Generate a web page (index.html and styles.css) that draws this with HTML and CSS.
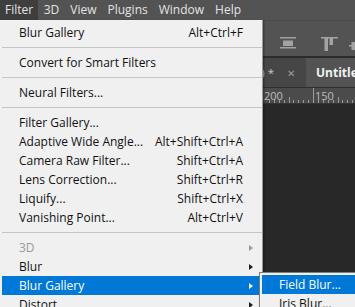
FILE: index.html
```html
<!DOCTYPE html>
<html lang="en">
<head>
    <meta charset="UTF-8">
    <meta name="viewport" content="width=device-width, initial-scale=1.0">
    <title>Filter menu</title>
    <link rel="stylesheet" href="styles.css">
</head>
<body>
    <div class="menubar">
        <span class="top-item active">Filter</span>
        <span class="top-item">3D</span>
        <span class="top-item">View</span>
        <span class="top-item">Plugins</span>
        <span class="top-item">Window</span>
        <span class="top-item">Help</span>
    </div>

    <div class="workspace">
        <div class="options-bar">
            <svg class="opt-icon" width="16" height="12" viewBox="0 0 16 12">
                <rect x="0" y="0" width="16" height="1.5" fill="#a3a3a3"/>
                <rect x="3" y="3.5" width="10" height="5.5" fill="#a3a3a3"/>
                <rect x="0" y="10" width="16" height="1.5" fill="#a3a3a3"/>
            </svg>
            <div class="divider"></div>
            <svg class="opt-icon" width="17" height="14" viewBox="0 0 17 14">
                <rect x="0" y="0" width="17" height="1.5" fill="#a3a3a3"/>
                <rect x="3.5" y="0" width="3.5" height="14" fill="#a3a3a3"/>
                <rect x="8.5" y="0" width="3.5" height="8" fill="#a3a3a3"/>
            </svg>
            <svg class="opt-icon partial" width="6" height="8" viewBox="0 0 6 8">
                <rect x="0" y="3" width="6" height="1.5" fill="#a3a3a3"/>
                <rect x="2.5" y="0" width="3.5" height="8" fill="#a3a3a3"/>
            </svg>
        </div>
        <div class="tab-bar">
            <div class="tab inactive">
                <span class="tab-title">Untitled-2 @ 66.7% (RGB/8) *</span>
                <span class="tab-close">&#x2715;</span>
            </div>
            <div class="tab current">Untitled-1 @ 100% (RGB/8)</div>
        </div>
        <div class="ruler">
            <span class="ruler-num n200">200</span>
            <span class="ruler-num n150">150</span>
            <svg class="ticks" width="355" height="15" viewBox="0 0 355 15">
                <g stroke="#9a9a9a" stroke-width="1">
                    <line x1="313.5" y1="0" x2="313.5" y2="15"/>
                    <line x1="269.5" y1="12" x2="269.5" y2="15"/>
                    <line x1="274.5" y1="12" x2="274.5" y2="15"/>
                    <line x1="279.5" y1="12" x2="279.5" y2="15"/>
                    <line x1="284.5" y1="12" x2="284.5" y2="15"/>
                    <line x1="289.5" y1="9" x2="289.5" y2="15"/>
                    <line x1="293.5" y1="12" x2="293.5" y2="15"/>
                    <line x1="298.5" y1="12" x2="298.5" y2="15"/>
                    <line x1="303.5" y1="12" x2="303.5" y2="15"/>
                    <line x1="308.5" y1="12" x2="308.5" y2="15"/>
                    <line x1="318.5" y1="12" x2="318.5" y2="15"/>
                    <line x1="323.5" y1="12" x2="323.5" y2="15"/>
                    <line x1="328.5" y1="12" x2="328.5" y2="15"/>
                    <line x1="333.5" y1="12" x2="333.5" y2="15"/>
                    <line x1="338.5" y1="9" x2="338.5" y2="15"/>
                    <line x1="342.5" y1="12" x2="342.5" y2="15"/>
                    <line x1="347.5" y1="12" x2="347.5" y2="15"/>
                    <line x1="352.5" y1="12" x2="352.5" y2="15"/>
                </g>
            </svg>
        </div>
        <div class="canvas-area"></div>
    </div>

    <div class="menu">
        <div class="item"><span class="label">Blur Gallery</span><span class="key">Alt+Ctrl+F</span><span class="arrow-slot"></span></div>
        <div class="sep"></div>
        <div class="item"><span class="label">Convert for Smart Filters</span><span class="arrow-slot"></span></div>
        <div class="sep"></div>
        <div class="item"><span class="label">Neural Filters...</span><span class="arrow-slot"></span></div>
        <div class="sep"></div>
        <div class="item"><span class="label">Filter Gallery...</span><span class="arrow-slot"></span></div>
        <div class="item"><span class="label">Adaptive Wide Angle...</span><span class="key">Alt+Shift+Ctrl+A</span><span class="arrow-slot"></span></div>
        <div class="item"><span class="label">Camera Raw Filter...</span><span class="key">Shift+Ctrl+A</span><span class="arrow-slot"></span></div>
        <div class="item"><span class="label">Lens Correction...</span><span class="key">Shift+Ctrl+R</span><span class="arrow-slot"></span></div>
        <div class="item"><span class="label">Liquify...</span><span class="key">Shift+Ctrl+X</span><span class="arrow-slot"></span></div>
        <div class="item"><span class="label">Vanishing Point...</span><span class="key">Alt+Ctrl+V</span><span class="arrow-slot"></span></div>
        <div class="sep"></div>
        <div class="item disabled"><span class="label">3D</span><span class="arrow-slot"><i class="arrow"></i></span></div>
        <div class="item"><span class="label">Blur</span><span class="arrow-slot"><i class="arrow"></i></span></div>
        <div class="item selected"><span class="label">Blur Gallery</span><span class="arrow-slot"><i class="arrow"></i></span></div>
        <div class="item"><span class="label">Distort</span><span class="arrow-slot"><i class="arrow"></i></span></div>
    </div>

    <div class="submenu">
        <div class="item selected"><span class="label">Field Blur...</span></div>
        <div class="item"><span class="label">Iris Blur...</span></div>
    </div>
</body>
</html>
```

FILE: styles.css
```css
body {
    margin: 0;
    padding: 0;
    width: 355px;
    height: 307px;
    overflow: hidden;
    background-color: #282828;
    font-family: "Open Sans", "Liberation Sans", sans-serif;
    font-size: 12px;
    position: relative;
}

/* top menu bar */
.menubar {
    height: 20px;
    background-color: #535353;
    display: flex;
    align-items: stretch;
}

.top-item {
    padding: 0 5.5px;
    line-height: 20px;
    color: #e4e4e4;
}

.top-item.active {
    background-color: #3e3e3e;
    padding: 0 5px 0 5px;
}

/* photoshop workspace behind the menu */
.options-bar {
    height: 38px;
    background-color: #535353;
    display: flex;
    align-items: flex-start;
    padding-left: 280px;
    box-sizing: border-box;
    border-top: 1px solid #4a4a4a;
    border-bottom: 2px solid #2b2b2b;
}

.opt-icon {
    margin-top: 16px;
    flex-shrink: 0;
}

.divider {
    width: 1px;
    height: 26px;
    margin: 7px 12px 0 13px;
    background-color: #3c3c3c;
}

.opt-icon.partial {
    margin-top: 21px;
    margin-left: 11px;
}

.tab-bar {
    height: 29px;
    display: flex;
    background-color: #424242;
    border-bottom: 1px solid #2e2e2e;
}

.tab {
    display: flex;
    align-items: center;
    white-space: nowrap;
    overflow: hidden;
}

.tab.inactive {
    width: 306px;
    flex-shrink: 0;
    justify-content: flex-end;
    background-color: #464646;
    color: #c9c9c9;
    font-size: 11.5px;
}

.tab-close {
    font-size: 10px;
    color: #9c9c9c;
    margin: 0 11px 0 13px;
}

.tab.current {
    flex: 1;
    background-color: #535353;
    color: #f2f2f2;
    font-weight: bold;
    font-size: 12px;
    padding-left: 10px;
}

.ruler {
    height: 15px;
    background-color: #4b4b4b;
    position: relative;
    border-bottom: 1px solid #333;
}

.ticks {
    position: absolute;
    left: 0;
    top: 0;
}

.ruler-num {
    position: absolute;
    top: 1px;
    font-size: 11px;
    line-height: 14px;
    color: #bdbdbd;
}

.n200 {
    left: 264px;
}

.n150 {
    left: 315px;
}

.canvas-area {
    height: 200px;
    background-color: #282828;
}

/* dropdown menu */
.menu {
    position: absolute;
    left: 0;
    top: 20px;
    width: 263px;
    padding: 3px 0 0 2px;
    box-sizing: border-box;
    background-color: #f0f0f0;
    border-right: 1px solid #9b9b9b;
    box-shadow: 1px 1px 2px rgba(0, 0, 0, 0.4);
    color: #111;
}

.item {
    height: 19px;
    line-height: 19px;
    display: flex;
    align-items: center;
    padding-left: 17px;
    white-space: nowrap;
}

.menu .item {
    margin-right: 2px;
}

.label {
    flex: 1;
}

.arrow-slot {
    width: 17px;
    height: 19px;
    display: flex;
    align-items: center;
    padding-left: 6px;
    box-sizing: border-box;
}

.arrow {
    width: 0;
    height: 0;
    border-left: 4px solid #1e1e1e;
    border-top: 3.5px solid transparent;
    border-bottom: 3.5px solid transparent;
}

.sep {
    height: 1px;
    margin: 5px 0 5px 0;
    background-color: #c6c6c6;
}

.item.disabled {
    color: #9a9a9a;
}

.item.disabled .arrow {
    border-left-color: #9a9a9a;
}

.item.selected {
    background-color: #0078d7;
    color: #fff;
}

.item.selected .arrow {
    border-left-color: #fff;
}

/* blur gallery submenu */
.submenu {
    position: absolute;
    left: 259px;
    top: 272px;
    width: 140px;
    padding: 2px;
    background-color: #f0f0f0;
    border: 1px solid #7d7d7d;
    box-shadow: 1px 1px 2px rgba(0, 0, 0, 0.4);
    color: #111;
}
```
